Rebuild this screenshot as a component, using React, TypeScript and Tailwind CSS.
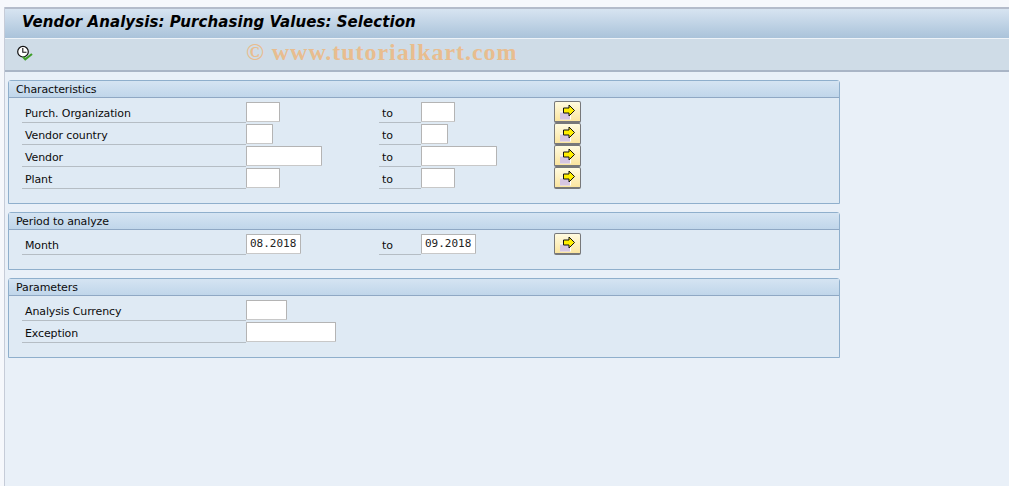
const Arrow = () => (
  <svg width="25" height="19" viewBox="0 0 25 19" className="block">
    <rect x="5" y="9.5" width="11" height="8" fill="#fff" />
    <rect x="5" y="10.5" width="10" height="7" fill="#d6c6e2" />
    <path d="M8.5 6H14V3L19.5 8.5L14 14V11H8.5Z" fill="#ffee00" stroke="#111" strokeWidth="1" />
  </svg>
);

const MoreButton = () => (
  <div className="w-[27px] h-[22px] rounded-[2px] border border-[#77787a] border-b-2 bg-gradient-to-b from-[#fffbe0] to-[#fbe59f]">
    <Arrow />
  </div>
);

const Input = ({ w, value }: { w: string; value?: string }) => (
  <div className={`${w} h-[20px] bg-white border border-[#b4b4b4] border-b-[#c8c8c8] rounded-[1px] pl-[3px] font-['DejaVu_Sans_Mono',monospace] text-[11px] leading-[18px] tracking-normal text-[#222]`}>
    {value}
  </div>
);

const Row = ({ label, w, from, to, more = true }: { label: string; w: string; from?: string; to?: string; more?: boolean; }) => (
  <div className="h-[22px] flex items-start">
    <div className="w-[224px] h-[21px] border-b border-[#b5bdc4] pl-[3px] pt-[3px] leading-[17px]">{label}</div>
    <div className="w-[133px]"><Input w={w} value={from} /></div>
    {more && (
      <>
        <div className="w-[42px] h-[21px] border-b border-[#b5bdc4] pl-[3px] pt-[3px] leading-[17px]">to</div>
        <div className="w-[133px]"><Input w={w} value={to} /></div>
        <div className="-mt-px"><MoreButton /></div>
      </>
    )}
  </div>
);

const Panel = ({ title, h, children }: { title: string; h: string; children: React.ReactNode }) => (
  <section className={`${h} w-[832px] border border-[#8fafcc] rounded-tr-[3px] rounded-tl-[3px] bg-[#dfeaf4] flex flex-col`}>
    <div className="h-[17px] shrink-0 border-b border-[#8fa8c4] bg-gradient-to-b from-[#d5e4f2] to-[#c0d6ea] pl-[7px] leading-[17px]">{title}</div>
    <div className="pl-[13px] pt-[4px]">{children}</div>
  </section>
);

export default function App() {
  return (
    <div className="relative w-[1009px] h-[486px] overflow-hidden bg-[#f6f8fc] font-['DejaVu_Sans',sans-serif] text-[11px] tracking-[-0.12px] text-[#0c0c0c]">
      <div className="h-[7px]" />
      <div className="ml-[4px] h-[479px] border-l border-[#c6ccd8] bg-[#e9f0f8] flex flex-col">
        <header className="h-[32px] shrink-0 border-t-2 border-[#b4bccb] border-b border-b-[#eef3f8] bg-gradient-to-b from-[#d7e4f1] to-[#aac3da] pl-[17px] font-['DejaVu_Sans',sans-serif] font-bold italic text-[15px] leading-[26px] tracking-[0.07px] text-black">
          Vendor Analysis: Purchasing Values: Selection
        </header>
        <div className="h-[33px] shrink-0 bg-[#cfdce7] border-b-2 border-[#a9b5c6] pl-[12px] flex items-center">
          <svg width="18" height="19" viewBox="0 0 18 19">
            <circle cx="6" cy="6.7" r="5.3" fill="#fff" stroke="#111" strokeWidth="1.2" />
            <path d="M5.8 3V7.2H9.5" fill="none" stroke="#111" strokeWidth="1.1" />
            <path d="M6 11.7L8.3 14.3L15 9" fill="none" stroke="#3f9f2a" strokeWidth="2.2" />
          </svg>
        </div>
        <main className="pt-[8px] pl-[3px] flex flex-col gap-[8px]">
          <Panel title="Characteristics" h="h-[124px]">
            <Row label="Purch. Organization" w="w-[34px]" />
            <Row label="Vendor country" w="w-[27px]" />
            <Row label="Vendor" w="w-[76px]" />
            <Row label="Plant" w="w-[34px]" />
          </Panel>
          <Panel title="Period to analyze" h="h-[58px]">
            <Row label="Month" w="w-[55px]" from="08.2018" to="09.2018" />
          </Panel>
          <Panel title="Parameters" h="h-[80px]">
            <Row label="Analysis Currency" w="w-[41px]" more={false} />
            <Row label="Exception" w="w-[90px]" more={false} />
          </Panel>
        </main>
      </div>
      <div className="absolute left-[246px] top-[38px] font-['Liberation_Serif',serif] font-bold text-[24px] leading-[28px] tracking-[0.95px] text-[#e8bd8f] whitespace-nowrap">
        © www.tutorialkart.com
      </div>
    </div>
  );
}
